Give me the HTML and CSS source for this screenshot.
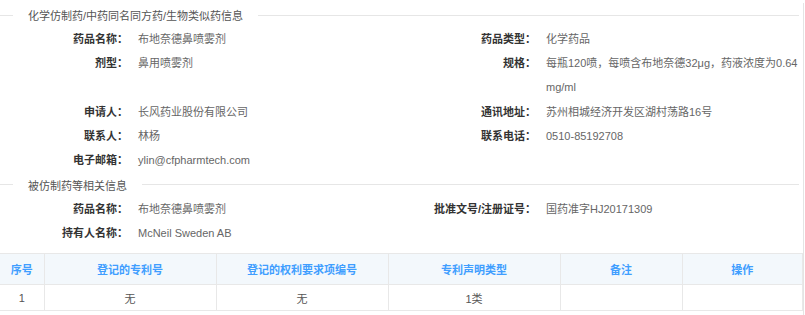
FILE: index.html
```html
<!DOCTYPE html>
<html lang="zh-CN">
<head>
  <meta charset="UTF-8" />
  <meta name="viewport" content="width=device-width, initial-scale=1.0" />
  <title>药品信息</title>
  <link rel="stylesheet" href="styles.css">
</head>
<body>
  <div class="page">
    <div class="section-title">化学仿制药/中药同名同方药/生物类似药信息</div>
    <div class="info-grid">
      <div class="item"><span class="label">药品名称：</span><span class="value">布地奈德鼻喷雾剂</span></div>
      <div class="item"><span class="label">药品类型：</span><span class="value">化学药品</span></div>
      <div class="item"><span class="label">剂型：</span><span class="value">鼻用喷雾剂</span></div>
      <div class="item tall"><span class="label">规格：</span><span class="value">每瓶120喷，每喷含布地奈德32μg，药液浓度为0.64mg/ml</span></div>
      <div class="item"><span class="label">申请人：</span><span class="value">长风药业股份有限公司</span></div>
      <div class="item"><span class="label">通讯地址：</span><span class="value">苏州相城经济开发区湖村荡路16号</span></div>
      <div class="item"><span class="label">联系人：</span><span class="value">林杨</span></div>
      <div class="item"><span class="label">联系电话：</span><span class="value">0510-85192708</span></div>
      <div class="item"><span class="label">电子邮箱：</span><span class="value">ylin@cfpharmtech.com</span></div>
      <div class="item"></div>
    </div>

    <div class="section-title second">被仿制药等相关信息</div>
    <div class="info-grid">
      <div class="item"><span class="label">药品名称：</span><span class="value">布地奈德鼻喷雾剂</span></div>
      <div class="item"><span class="label">批准文号/注册证号：</span><span class="value">国药准字HJ20171309</span></div>
      <div class="item"><span class="label">持有人名称：</span><span class="value">McNeil Sweden AB</span></div>
      <div class="item"></div>
    </div>

    <table class="patent-table">
      <colgroup>
        <col style="width:44px">
        <col style="width:172px">
        <col style="width:172px">
        <col style="width:172px">
        <col style="width:122px">
        <col>
      </colgroup>
      <thead>
        <tr>
          <th>序号</th>
          <th>登记的专利号</th>
          <th>登记的权利要求项编号</th>
          <th>专利声明类型</th>
          <th>备注</th>
          <th>操作</th>
        </tr>
      </thead>
      <tbody>
        <tr>
          <td>1</td>
          <td>无</td>
          <td>无</td>
          <td>1类</td>
          <td></td>
          <td></td>
        </tr>
      </tbody>
    </table>
  </div>
</body>
</html>
```

FILE: styles.css
```css
body {
  margin: 0;
  background: #fff;
  font-family: "Liberation Sans", "Noto Sans CJK SC", sans-serif;
  font-size: 11px;
  color: #666;
}
.page {
  width: 803px;
  min-height: 315px;
  border-right: 1px solid #e4e4e4;
}
.section-title {
  display: flex;
  align-items: center;
  height: 24px;
  margin-top: 3px;
  margin-right: 4px;
  color: #555;
}
.section-title::before {
  content: "";
  width: 13px;
  border-top: 1px solid #e6e6e6;
  margin-right: 15px;
}
.section-title::after {
  content: "";
  flex: 1;
  border-top: 1px solid #e6e6e6;
  margin-left: 15px;
}
.section-title.second {
  margin-top: 0;
  height: 25px;
}
.info-grid {
  display: grid;
  grid-template-columns: 408px 1fr;
}
.item {
  display: flex;
  line-height: 24px;
  min-height: 24px;
}
.item.tall {
  padding-bottom: 1px;
}
.label {
  flex: none;
  width: 128px;
  text-align: right;
  font-weight: bold;
  color: #333;
}
.value {
  margin-left: 10px;
  word-break: break-all;
}
.patent-table {
  width: 803px;
  margin-top: 8px;
  border-collapse: collapse;
  table-layout: fixed;
}
.patent-table th,
.patent-table td {
  border: 1px solid #e8e8e8;
  text-align: center;
  padding: 0;
}
.patent-table tr > :first-child {
  border-left: none;
}
.patent-table th {
  height: 30px;
  background: #f3f8fc;
  color: #409eff;
  font-weight: bold;
}
.patent-table td {
  height: 25px;
  color: #555;
}
```
